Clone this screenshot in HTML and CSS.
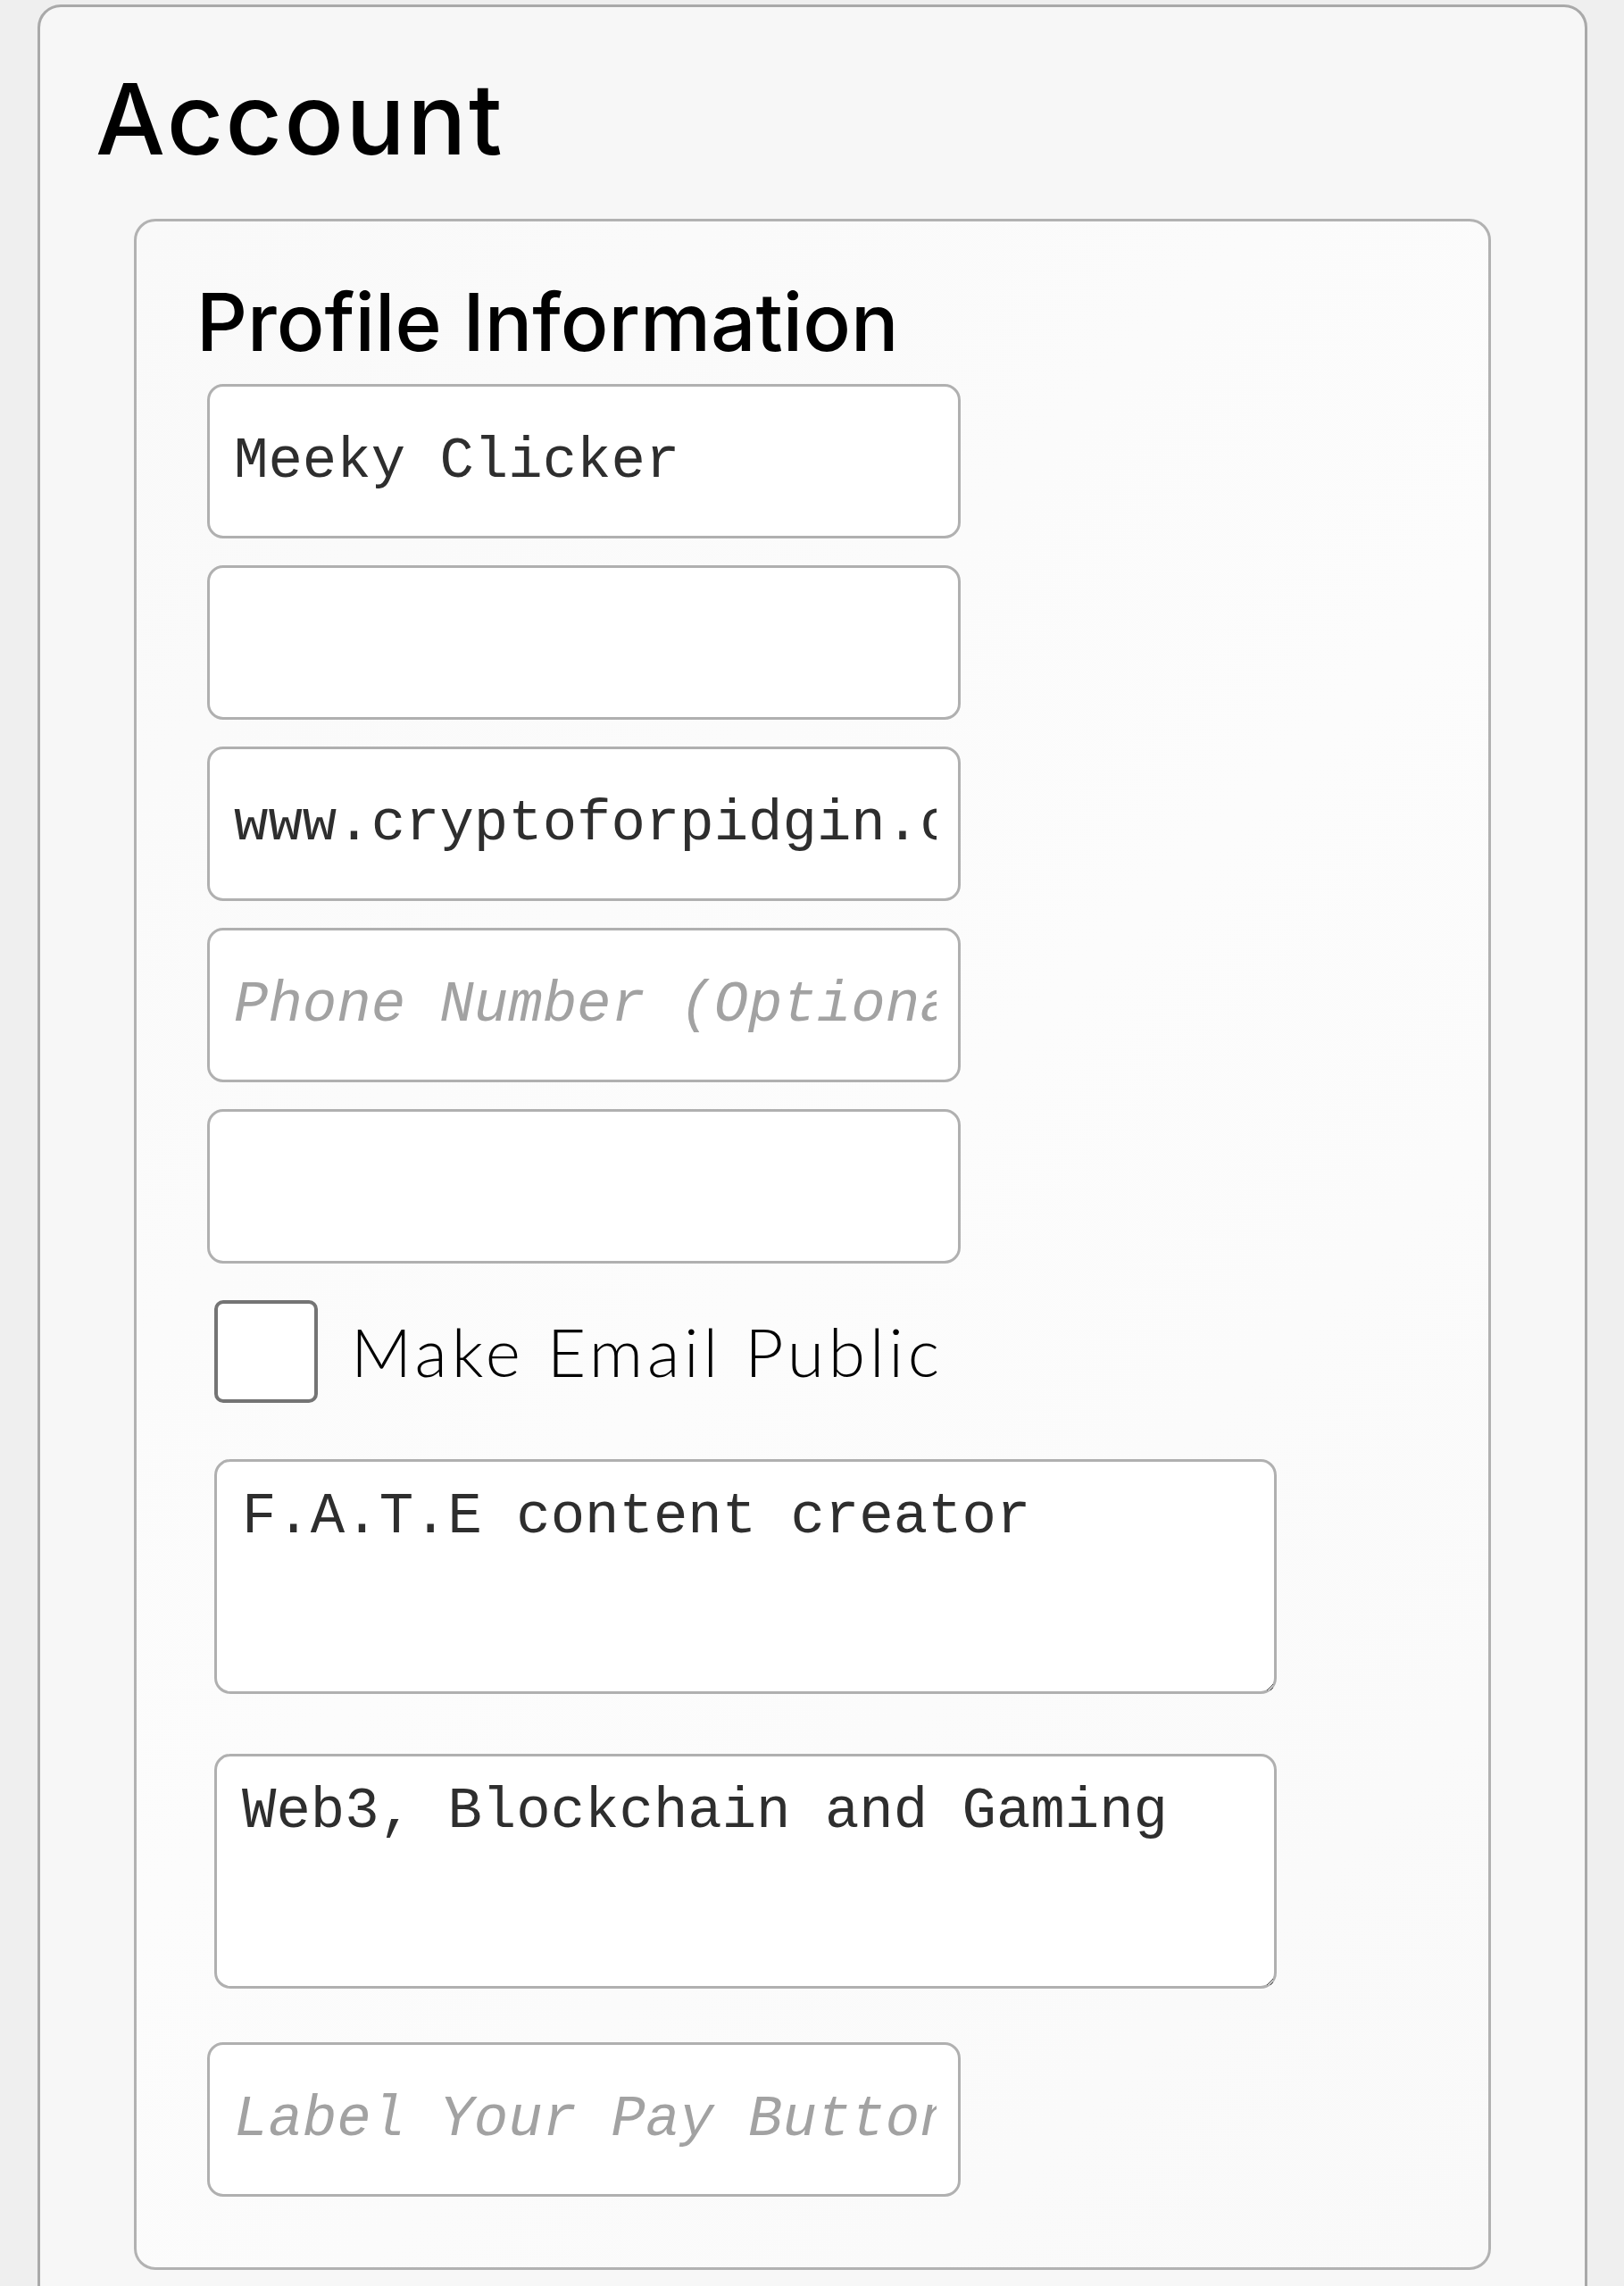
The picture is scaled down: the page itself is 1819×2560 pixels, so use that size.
FILE: index.html
```html
<!DOCTYPE html>
<html lang="en">
<head>
<meta charset="utf-8">
<title>Account</title>
<link rel="stylesheet" href="styles.css">
</head>
<body>
<main class="account-card">
  <h1 class="account-title">Account</h1>
  <section class="profile-card">
    <h2 class="profile-title">Profile Information</h2>
    <form class="profile-form">
      <input class="field" type="text" value="Meeky Clicker">
      <input class="field" type="email" value="">
      <input class="field" type="text" value="www.cryptoforpidgin.com">
      <input class="field" type="tel" placeholder="Phone Number (Optional)">
      <input class="field" type="text" value="">
      <label class="check-row">
        <input class="check" type="checkbox">
        <span class="check-label">Make Email Public</span>
      </label>
      <textarea class="area area-first">F.A.T.E content creator</textarea>
      <textarea class="area area-second">Web3, Blockchain and Gaming</textarea>
      <input class="field field-last" type="text" placeholder="Label Your Pay Button">
    </form>
  </section>
</main>
</body>
</html>
```

FILE: styles.css
```css
* {
  box-sizing: border-box;
}

html, body {
  margin: 0;
  padding: 0;
  background: #efefef;
}

body {
  font-family: Inter, "Noto Sans", sans-serif;
  color: #000;
}

.account-card {
  margin: 5px 41px 0 42px;
  padding: 70px 0 120px 0;
  background: #f7f7f7;
  border: 3px solid #a9a9a9;
  border-radius: 26px;
}

.account-title {
  margin: 0 0 57px 62px;
  font-size: 110px;
  line-height: 1;
  font-weight: 500;
  letter-spacing: 2.5px;
}

.profile-card {
  margin: 0 105px;
  padding: 68px 0 79px 79px;
  background: linear-gradient(135deg, #f9f9f9 0%, #fcfcfc 50%, #f9f9f9 100%);
  border: 3px solid #b2b2b2;
  border-radius: 24px;
}

.profile-title {
  margin: 0 0 25px -12px;
  font-size: 89px;
  line-height: 1;
  font-weight: 500;
  letter-spacing: 0;
}

.profile-form {
  display: flex;
  flex-direction: column;
  align-items: flex-start;
}

.field {
  display: block;
  width: 844px;
  height: 173px;
  margin: 0 0 30px 0;
  padding: 0 24px 0 27px;
  background: #fff;
  border: 3px solid #b0b0b0;
  border-radius: 18px;
  font-family: "Courier New", "Liberation Mono", monospace;
  font-size: 64px;
  color: #2e2e2e;
  outline: none;
}

.field::placeholder {
  color: #a2a2a2;
  font-style: italic;
  opacity: 1;
}

.check-row {
  display: flex;
  align-items: center;
  margin: 11px 0 0 8px;
  gap: 37px;
}

.check {
  appearance: none;
  -webkit-appearance: none;
  display: block;
  width: 116px;
  height: 115px;
  margin: 0;
  background: #fff;
  border: 4px solid #747474;
  border-radius: 10px;
}

.check-label {
  font-family: Lato, Inter, "Noto Sans", sans-serif;
  font-weight: 300;
  font-size: 75px;
  letter-spacing: 4.8px;
  line-height: 1;
  color: #000;
}

.area {
  display: block;
  width: 1190px;
  height: 263px;
  margin: 0 0 0 8px;
  padding: 26px 28px;
  background: #fff;
  border: 3px solid #b0b0b0;
  border-radius: 18px;
  font-family: "Courier New", "Liberation Mono", monospace;
  font-size: 64px;
  color: #2e2e2e;
  overflow: hidden;
  outline: none;
}

.area-first {
  margin-top: 63px;
}

.area-second {
  margin-top: 67px;
}

.field-last {
  margin: 60px 0 0 0;
}
```
